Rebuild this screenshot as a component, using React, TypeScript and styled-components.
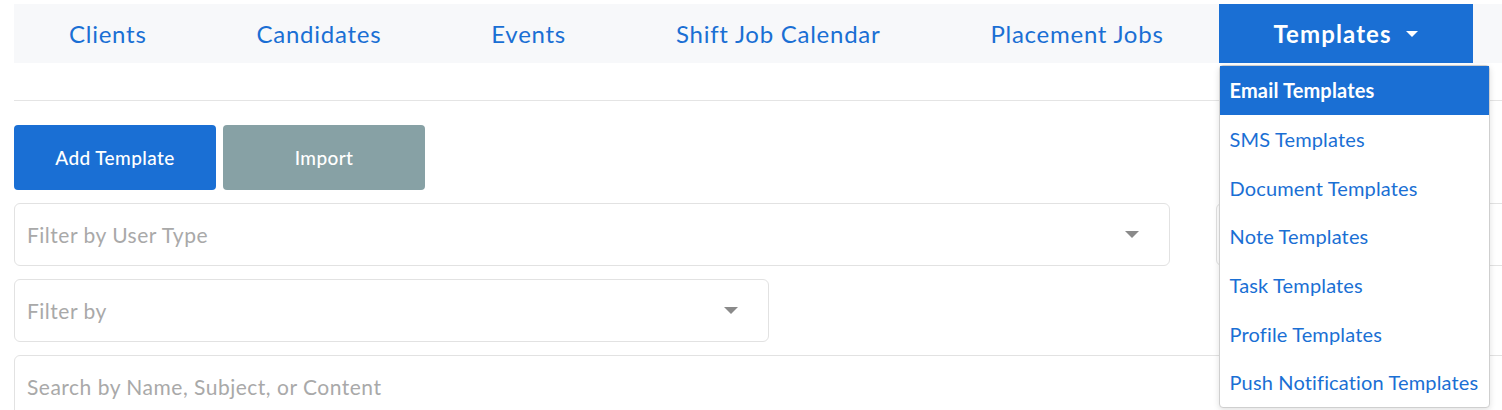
import React from "react";
import styled, { createGlobalStyle } from "styled-components";

const blue = "#1a6fd4";

const GlobalStyle = createGlobalStyle`
  html, body {
    margin: 0;
    padding: 0;
    background: #fff;
    overflow: hidden;
  }
  body {
    font-family: "Lato", "Open Sans", sans-serif;
  }
`;

const Page = styled.div`
  width: 1502px;
  height: 410px;
  padding: 4px 0 0 14px;
  box-sizing: border-box;
  overflow: hidden;
`;

const NavBar = styled.nav`
  display: flex;
  align-items: stretch;
  height: 59px;
  width: 1520px;
  background: #f7f8fa;
`;

const NavItemWrap = styled.div`
  position: relative;
  display: flex;
`;

const NavItem = styled.div<{ active?: boolean }>`
  display: flex;
  align-items: center;
  padding: 0 55px;
  font-size: 24px;
  letter-spacing: ${(p) => (p.active ? "1.1px" : "0.74px")};
  color: ${(p) => (p.active ? "#fff" : blue)};
  background: ${(p) => (p.active ? blue : "transparent")};
  font-weight: ${(p) => (p.active ? 700 : 400)};
  white-space: nowrap;
  cursor: pointer;
  .caret {
    margin-left: 14px;
    width: 0;
    height: 0;
    border-left: 6.5px solid transparent;
    border-right: 6.5px solid transparent;
    border-top: 6.5px solid #fff;
  }
`;

const Menu = styled.div`
  position: absolute;
  top: 61px;
  left: 0;
  width: 271px;
  background: #fff;
  border: 1px solid #cfcfcf;
  border-radius: 4px;
  box-shadow: 0 2px 6px rgba(0, 0, 0, 0.12);
  z-index: 10;
  box-sizing: border-box;
`;

const MenuItem = styled.div<{ selected?: boolean }>`
  height: 48.7px;
  display: flex;
  align-items: center;
  padding: 0 10px;
  font-size: 20px;
  letter-spacing: 0.15px;
  white-space: nowrap;
  color: ${(p) => (p.selected ? "#fff" : blue)};
  background: ${(p) => (p.selected ? blue : "transparent")};
  font-weight: ${(p) => (p.selected ? 700 : 400)};
`;

const Divider = styled.hr`
  margin: 37px 0 0;
  border: 0;
  border-top: 1px solid #e4e4e4;
  width: 1520px;
`;

const ButtonRow = styled.div`
  display: flex;
  gap: 7px;
  margin-top: 24px;
`;

const Button = styled.button<{ variant: "primary" | "muted" }>`
  width: 202px;
  height: 65px;
  border: 0;
  border-radius: 4px;
  font-family: inherit;
  font-size: 19px;
  letter-spacing: 0.4px;
  font-weight: 500;
  color: #fff;
  background: ${(p) => (p.variant === "primary" ? blue : "#87a1a5")};
`;

const FilterRow = styled.div`
  display: flex;
  gap: 46px;
  margin-top: 13px;
`;

const Field = styled.div<{ width: number }>`
  flex: none;
  width: ${(p) => p.width}px;
  height: 63px;
  border: 1px solid #e2e2e2;
  border-radius: 6px;
  box-sizing: border-box;
  display: flex;
  align-items: center;
  padding: 0 12px;
  font-size: 21px;
  letter-spacing: 0.5px;
  color: #a9a9a9;
  white-space: nowrap;
`;

const Arrow = styled.span`
  margin-left: auto;
  margin-right: 18px;
  width: 0;
  height: 0;
  border-left: 7px solid transparent;
  border-right: 7px solid transparent;
  border-top: 7px solid #8a8a8a;
`;

const Stack = styled.div`
  margin-top: 13px;
`;

const navItems = ["Clients", "Candidates", "Events", "Shift Job Calendar", "Placement Jobs"];
const templateItems = [
  "Email Templates",
  "SMS Templates",
  "Document Templates",
  "Note Templates",
  "Task Templates",
  "Profile Templates",
  "Push Notification Templates",
];

export default function App() {
  return (
    <Page>
      <GlobalStyle />
      <NavBar>
        {navItems.map((n) => (
          <NavItem key={n}>{n}</NavItem>
        ))}
        <NavItemWrap>
          <NavItem active>
            Templates <span className="caret" />
          </NavItem>
          <Menu>
            {templateItems.map((t, i) => (
              <MenuItem key={t} selected={i === 0}>
                {t}
              </MenuItem>
            ))}
          </Menu>
        </NavItemWrap>
      </NavBar>
      <Divider />
      <ButtonRow>
        <Button variant="primary">Add Template</Button>
        <Button variant="muted">Import</Button>
      </ButtonRow>
      <FilterRow>
        <Field width={1156}>
          Filter by User Type
          <Arrow />
        </Field>
        <Field width={400} />
      </FilterRow>
      <Stack>
        <Field width={755}>
          Filter by
          <Arrow />
        </Field>
      </Stack>
      <Stack>
        <Field width={1600}>Search by Name, Subject, or Content</Field>
      </Stack>
    </Page>
  );
}
